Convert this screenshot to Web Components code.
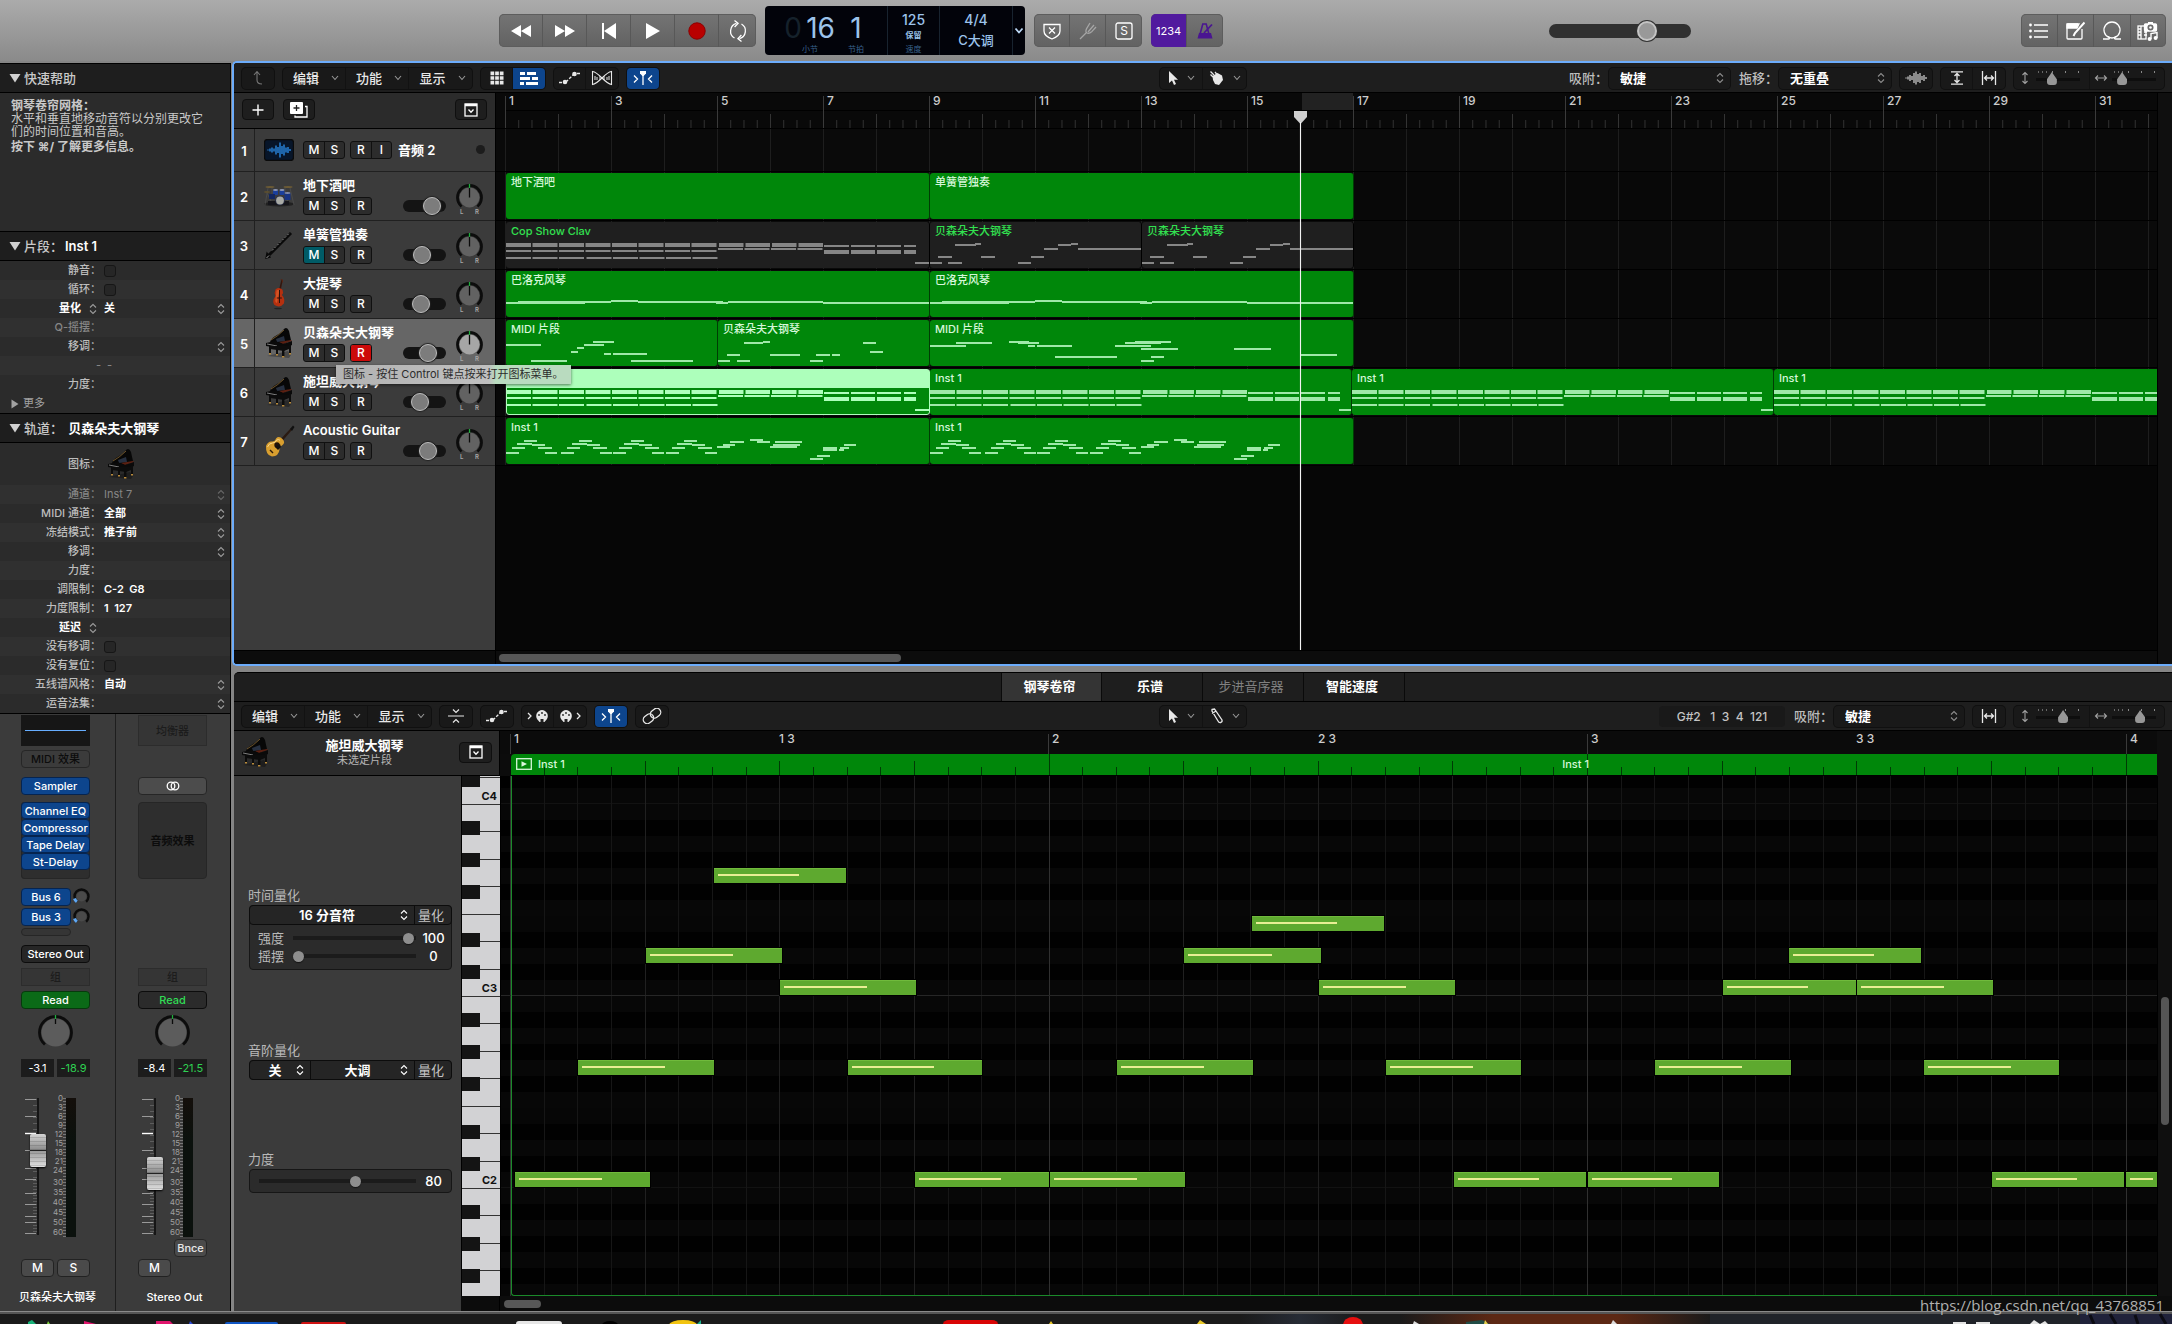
<!DOCTYPE html>
<html lang="zh-CN">
<head>
<meta charset="utf-8">
<title>Logic Pro</title>
<style>
  html, body { margin: 0; height: 100%; overflow: hidden; background: #858585; }
  body { font-family: Inter, "Noto Sans CJK SC", sans-serif; color: #e6e6e6; }
</style>
</head>
<body>
<daw-app></daw-app>
<script>
/* ---------- shared base ---------- */
const BASE = `
  *, *::before, *::after { box-sizing: border-box; }
  :host { display: block; font: 500 12px/16px Inter, "Noto Sans CJK SC", sans-serif; }
  button, input, select { font: inherit; color: inherit; margin: 0; padding: 0; border: 0; background: none; outline: none; appearance: none; -webkit-appearance: none; border-radius: 0; }
  button { display: flex; align-items: center; justify-content: center; white-space: nowrap; }
  select { white-space: nowrap; text-overflow: clip; }
`;
class Part extends HTMLElement {
  connectedCallback() {
    if (this.shadowRoot) return;
    this.attachShadow({ mode: 'open' }).innerHTML = `<style>${BASE}${this.css()}</style>${this.html()}`;
  }
  css() { return ''; }
  html() { return '<slot></slot>'; }
  a(n, d = '') { return this.getAttribute(n) ?? d; }
}
const def = (n, c) => customElements.define(n, c);

/* ---------- icons ---------- */
const S = (w, h, body, x = '') => `<svg xmlns="http://www.w3.org/2000/svg" width="${w}" height="${h}" viewBox="0 0 ${w} ${h}" fill="none" stroke="currentColor" stroke-width="1.3" ${x}>${body}</svg>`;
const PIANO = `<g stroke="none">
  <path d="M3 29 L25 31 L27 28 L24 24 Z" fill="#000" opacity=".3"/>
  <path d="M6 15 C8 9 16 8 20 2 Q23 -1 25 4 Q26 9 27 13 L18 18 Z" fill="#070707"/>
  <path d="M7 13 Q14 9 20 3" stroke="#8a6a35" stroke-width=".8" fill="none"/>
  <path d="M12 12 L20 9 L21 14 L13 15 Z" fill="#273040"/>
  <path d="M15 15 L27 13 L28 14 L19 17 Z" fill="#5a2012"/>
  <path d="M2 16 L11 14 L19 17 L28 14 L28 18 L20 22 L2 19 Z" fill="#0a0a0a"/>
  <path d="M3 17 L13 19" stroke="#999" stroke-width=".8"/>
  <path d="M5 19h2v8h-2zM12 20h2v8h-2zM18 21h2.4v9h-2.4zM25 18h2v9h-2z" fill="#0c0c0c"/>
  <path d="M6 19h19v3l-5 2-14-2z" fill="#0c0c0c"/>
  <path d="M5 26h2v1.6h-2zM12 27h2v1.6h-2zM18 29h2.4v1.6h-2.4zM25 26h2v1.6h-2z" fill="#b88a3a"/>
</g>`;
const ICONS = {
  rew: S(24, 16, '<path d="M12 2v12L2 8zM22 2v12L12 8z" fill="currentColor" stroke="none"/>'),
  fwd: S(24, 16, '<path d="M2 2v12l10-6zM12 2v12l10-6z" fill="currentColor" stroke="none"/>'),
  start: S(20, 18, '<path d="M3 1h2v16H3zM17 1v16L5 9z" fill="currentColor" stroke="none"/>'),
  play: S(20, 20, '<path d="M3 2v16l14-8z" fill="currentColor" stroke="none"/>'),
  rec: S(20, 20, '<circle cx="10" cy="10" r="8.2" fill="#b90000" stroke="#8c0000" stroke-width="1"/>'),
  cycle: S(22, 22, '<path d="M7.5 18A8 8 0 0 1 9.500 3.400M14.500 4A8 8 0 0 1 12.500 18.600"/><path d="M7.500 .5l3.600 2.900L7.600 7M14.500 21.500l-3.600-2.900 3.500-3.600"/>'),
  shield: S(20, 20, '<path d="M2 3.5h16V10q0 5-8 8-8-3-8-8z"/><path d="M7 6.5l6 6M13 6.5l-6 6"/>'),
  fork: S(20, 20, '<path d="M2 18l6-6M12 2L8.6 7.6Q7 11 9 12t5-1.6L18 6M16 4L10 11"/>'),
  sbox: S(20, 20, '<rect x="2" y="2" width="16" height="16" rx="2"/>'),
  metro: S(20, 20, '<path d="M7.8 3h3.4l3 11H4.8z" stroke="currentColor" fill="none" stroke-width="1.6"/><path d="M4 12h12l1.5 5.5H2.5z" fill="currentColor" stroke="none"/><path d="M9 12L17 3.5" stroke-width="1.8"/>'),
  list: S(22, 18, '<path d="M6 3h14M6 9h14M6 15h14" stroke-width="1.4"/><g fill="currentColor" stroke="none"><circle cx="2.5" cy="3" r="1.4"/><circle cx="2.5" cy="9" r="1.4"/><circle cx="2.5" cy="15" r="1.4"/></g>'),
  note: S(20, 20, '<path d="M13 3H3q-1 0-1 1v13q0 1 1 1h13q1 0 1-1V8"/><path d="M2 3h12l-2 4H2z" fill="currentColor"/><path d="M19.5 1.5L10 12l-1.5 3" stroke-width="2"/>'),
  loop: S(20, 20, '<path d="M1 18h5.500q1.500 0 .5-1.600A8 8 0 1 1 13 16.400q-1 1.600.5 1.600H19"/><path d="M6 15.500q4 3 8 0"/>'),
  media: S(24, 22, '<rect x="2" y="6" width="8" height="13"/><path d="M2 9h3M2 12h3M2 15h3M8 12h3M8 15h3M5 6v13"/><rect x="8.500" y="4" width="12" height="7" rx="1" fill="currentColor"/><path d="M12 3h5" stroke-width="2"/><circle cx="14.500" cy="7.500" r="2.400" fill="#6a6a6a" stroke="#6a6a6a"/><circle cx="14.500" cy="7.500" r="1.300" fill="currentColor" stroke="none"/><path d="M15 19v-5.500l6-1V18" stroke-width="1.400"/><g fill="currentColor" stroke="none"><circle cx="13.600" cy="19" r="2"/><circle cx="19.600" cy="18" r="2"/></g>'),
  chev: S(8, 6, '<path d="M1 1l3 3.500L7 1" stroke-width="1.100"/>'),
  chevb: S(10, 8, '<path d="M1.500 1.500L5 5.500l3.500-4" stroke-width="1.800"/>'),
  updown: S(8, 12, '<path d="M1 4.500L4 1.500l3 3M1 7.500l3 3 3-3" stroke-width="1.100"/>'),
  up: S(14, 16, '<path d="M3 5l3-3.500L9 5M6 2v8q0 4 5 4" stroke-width="1.100"/>'),
  grid9: S(14, 14, '<path d="M0 0h4v4H0zM5 0h4v4H5zM10 0h4v4h-4zM0 5h4v4H0zM5 5h4v4H5zM10 5h4v4h-4zM0 10h4v4H0zM5 10h4v4H5zM10 10h4v4h-4z" fill="currentColor" stroke="none" transform="translate(.500 .500) scale(.93)"/>'),
  bars: S(18, 14, '<path d="M0 1h5v3H0zM7 1h9v3H7zM0 6h10v3H0zM12 6h6v3h-6zM0 11h4v3H0zM6 11h12v3H6z" fill="currentColor" stroke="none"/>'),
  auto: S(24, 14, '<path d="M1 11.500h3M19 2.500h4M8 11L16 3" stroke-dasharray="3 1.500"/><circle cx="7" cy="11" r="2.300" fill="currentColor" stroke="none"/><circle cx="16.500" cy="3" r="2.300" fill="currentColor" stroke="none"/>'),
  flex: S(22, 16, '<path d="M1.500 1.500v13Q5 14 11 8T20.500 1.500v13Q17 14 11 8T1.500 1.500z" stroke-width="1.100"/><path d="M4 6v4M6 7v3M9 6v4M13 6v4M16 7v3M18 6v4" stroke-width="1"/>'),
  catch: S(22, 16, '<path d="M8 1h6v2.500L11.600 6h-1.200L8 3.500z" fill="currentColor" stroke="none"/><path d="M11 5v10M2 5.500L5.500 9 2 12.500M20 5.500L16.500 9l3.500 3.500"/>'),
  pointer: S(12, 16, '<path d="M2 1v12l3-2.600L7 15l2-.9-2-4.400h4z" fill="currentColor" stroke="none"/>'),
  hand: S(16, 16, '<path d="M5 5L1.500 1.500M4 7L1.500 4.500M8 4.500L6 2" stroke-width="1.300"/><path d="M3.500 6l5-3 4.500 2.500 1 4.500-4 5-4-1-2-4z" fill="currentColor" stroke="none"/>'),
  pencil: S(14, 16, '<path d="M2 1.500l2.500-.5L12 12q.5 2-1.300 2.500Q9 15 8 13L2 3zM2 5.500L6 3"/>'),
  wave: S(22, 14, '<path d="M1 6.500v1M3 5.500v3M5 4v6M7 5v4M9 2v10M11 .5v13M13 3v8M15 2v10M17 5v4M19 4v6M21 6v2" stroke-width="1.100"/>'),
  vfit: S(14, 14, '<path d="M1 .8h12M1 13.200h12M7 3v8M4.500 5L7 2.500 9.500 5M4.500 9L7 11.500 9.500 9"/>'),
  hfit: S(16, 14, '<path d="M1.500 0v14M14.500 0v14M3.500 7h9M6 4.500L3.500 7 6 9.500M10 4.500L12.500 7 10 9.500"/>'),
  vz: S(8, 14, '<path d="M4 1.500v11M1.500 4L4 1.500 6.500 4M1.500 10L4 12.500 6.500 10" stroke-width="1.100"/>'),
  hz: S(14, 8, '<path d="M1.500 4h11M4 1.500L1.500 4 4 6.500M10 1.500L12.500 4 10 6.500" stroke-width="1.100"/>'),
  plus: S(12, 12, '<path d="M6 .5v11M.5 6h11" stroke-width="1.400"/>'),
  dup: S(18, 16, '<path d="M5 13.500v1.500h12V4.500h-2"/><rect x="0" y="0" width="13" height="12" rx="1" fill="currentColor" stroke="none"/><path d="M6.500 3v6M3.500 6h6" stroke="#222"/>'),
  cfg: S(14, 14, '<rect x="1" y="1" width="12" height="12"/><path d="M1 2h12" stroke-width="2.500"/><path d="M4.500 6.500L7 9.200l2.500-2.700"/>'),
  collapse: S(16, 16, '<path d="M0 8h16M5 1.500l3 3 3-3M5 14.500l3-3 3 3" stroke-width="1.200"/>'),
  midin: S(22, 14, '<path d="M1 4l3 3-3 3"/><path d="M15 1a6 6 0 0 1 5 9l-2.500 3h-5L10 10a6 6 0 0 1 5-9z" fill="currentColor" stroke="none"/><g fill="#222" stroke="none"><circle cx="15" cy="4" r=".9"/><circle cx="12" cy="6" r=".9"/><circle cx="18" cy="6" r=".9"/><path d="M13.500 10h3v3h-3z"/></g>'),
  midout: S(22, 14, '<path d="M18 4l3 3-3 3"/><path d="M7 1a6 6 0 0 1 5 9l-2.500 3h-5L2 10a6 6 0 0 1 5-9z" fill="currentColor" stroke="none"/><g fill="#222" stroke="none"><circle cx="7" cy="4" r=".9"/><circle cx="4" cy="6" r=".9"/><circle cx="10" cy="6" r=".9"/><path d="M5.500 10h3v3h-3z"/></g>'),
  link: S(20, 16, '<g transform="rotate(-38 10 8)"><rect x="0" y="4" width="11" height="8" rx="4"/><rect x="9" y="4" width="11" height="8" rx="4"/></g>'),
  stereo: S(14, 10, '<circle cx="5" cy="5" r="3.800"/><circle cx="9" cy="5" r="3.800"/>'),
  tri: S(12, 10, '<path d="M.5 1h11L6 9.500z" fill="currentColor" stroke="none"/>'),
  trir: S(8, 10, '<path d="M.5 .5v9l7-4.500z" fill="currentColor" stroke="none"/>'),
  region: S(16, 12, '<rect x=".7" y=".7" width="14.600" height="10.600"/><path d="M5.500 3.200v5.600L11 6z" fill="currentColor" stroke="none"/>'),
  audio: S(30, 22, '<rect x=".5" y=".5" width="29" height="21" rx="3" fill="#071529" stroke="#0a0a0a"/><path d="M4 10.500v1M6 9.500v3M8 8.500v5M10 9.500v3M12 6.500v9M14 8v6M16 3.500v15M18 7v8M20 5.500v11M22 8.500v5M24 8v6M26 10v2" stroke="#2f9bff" stroke-width="1.200"/>'),
  drums: S(32, 24, '<g stroke="none"><ellipse cx="16" cy="20" rx="15" ry="2.500" fill="#111" opacity=".6"/><path d="M5 4L2 21M4 9l6 12M27 4l4 17M28 9l-6 12M9 2v8M22 2v8" stroke="#4e4e4e" stroke-width=".8" fill="none"/><ellipse cx="7" cy="3" rx="4.500" ry="1" fill="#6b5a35"/><ellipse cx="25" cy="3" rx="4.500" ry="1" fill="#6b5a35"/><ellipse cx="4" cy="8" rx="3" ry=".9" fill="#5c4f30"/><rect x="10" y="6" width="5" height="5" rx="1" fill="#1a3f9c"/><rect x="16.500" y="6" width="5" height="5" rx="1" fill="#1a3f9c"/><ellipse cx="12.500" cy="6" rx="2.500" ry=".9" fill="#8d97b5"/><ellipse cx="19" cy="6" rx="2.500" ry=".9" fill="#8d97b5"/><rect x="6" y="10" width="6" height="5" fill="#13275f"/><rect x="21.500" y="9" width="6" height="7" fill="#183484"/><ellipse cx="24.500" cy="9" rx="3" ry="1" fill="#7f88a5"/><path d="M5 17h21v4H5z" fill="#15151a"/><circle cx="17" cy="16.500" r="4.800" fill="#2b3048"/><circle cx="17" cy="16.500" r="3.900" fill="#a9aba6"/></g>'),
  clarinet: S(30, 30, '<path d="M3 27L27 3" stroke="#0a0a0a" stroke-width="3"/><path d="M2 28l4-1-3-4z" fill="#0a0a0a" stroke="#0a0a0a"/><path d="M8 20.500L25 3.500" stroke="#8b8b8b" stroke-width="1" stroke-dasharray="2 1.600"/><path d="M2.500 28L5 25.500" stroke="#bbb" stroke-width=".8"/>'),
  cello: S(30, 32, '<g stroke="none"><ellipse cx="14" cy="30.500" rx="4" ry=".8" fill="#222"/><path d="M14.200 15L17.500 1.500l1.200.4-2.700 14z" fill="#34160d"/><path d="M16.800 1.500q2.500-.5 1.700 3" stroke="#5a2413" fill="none" stroke-width="1"/><path d="M11.500 11.500q3.500-3 7 .2 1.400 3-.6 5.300 3.400 3.500 2 8.500Q16 30.500 10.500 27q-3-3.500 1-9-1.600-3.500 0-6.500z" fill="#b5300f"/><path d="M12.500 12.500q2-1.500 3 0L13 25q-2.500-1-1.500-4z" fill="#e0612c" opacity=".7"/><path d="M15.500 12v13M12.800 20h5" stroke="#2a0f08" stroke-width="1"/></g>'),
  piano: S(30, 32, PIANO),
  guitar: S(32, 32, '<g stroke="none"><path d="M14 18L28 3l1.500 1.300L16 20z" fill="#2a1a12"/><path d="M27 4l3-3.500L31.500 2 29 6z" fill="#101010"/><path d="M3 21q2-5 6-4.500 3 .3 4-3 3-3 6.500.5 3.500 3.500-.5 6.500-3 1.500-2.500 4-.5 6.500-7.500 7-6.500-1-6-10.500z" fill="#d99f2f"/><path d="M4.500 22q1.500-4 5-4 3 0 4.200-3 2-1 3.300.3" stroke="#f6d58a" stroke-width="1" fill="none"/><circle cx="14" cy="20" r="2.700" fill="#20120a"/><path d="M12 22l3 3 3-3-1-3z" fill="#15100c"/><path d="M7 25l3 3" stroke="#2d1a0b" stroke-width="1.400"/></g>')
};
def('daw-icon', class extends Part {
  css() { return ':host{display:block;flex:none;line-height:0} svg{display:block}'; }
  html() { return ICONS[this.a('name')] || ''; }
});
const I = n => `<daw-icon name="${n}"></daw-icon>`;

/* pan knob */
def('pan-knob', class extends Part {
  css() { return ':host{display:block;flex:none} svg{display:block}'; }
  html() {
    const s = +this.a('size', 26), c = s / 2, r = c - 1.5, k = Math.sin(.72), q = Math.cos(.72);
    const f = this.a('fill', '#666');
    return S(s, s, `<circle cx="${c}" cy="${c}" r="${r - 2}" fill="${f}" stroke="none"/>
      <path d="M${c - r * k} ${c + r * q}A${r} ${r} 0 1 1 ${c + r * k} ${c + r * q}" stroke="#0c0c0c" stroke-width="${s > 20 ? 2.8 : 2.4}"/>
      ${this.hasAttribute('send') ? `<path d="M${c - r * k} ${c + r * q}A${r} ${r} 0 0 1 ${c - r} ${c + 2}" stroke="#5fa8f5" stroke-width="3"/>` : `<path d="M${c} 1v${s > 30 ? 8 : c - 1}" stroke="#0a0a0a" stroke-width="1.300"/><path d="M${c} 0v4" stroke="#1fae3c"/>`}`);
  }
});

/* ---------- control bar ---------- */
def('control-bar', class extends Part {
  css() { return `
    :host { display: flex; align-items: flex-start; position: relative; background: linear-gradient(#ababab, #8a8a8a); }
    .bar { flex: 1; display: grid; grid-template-columns: 499px 1fr auto; }
    .mid { display: flex; align-items: flex-start; grid-column: 2; }
    .grp { display: flex; height: 33px; margin-top: 14px; border-radius: 5px; overflow: hidden; background: linear-gradient(#747474, #626262); box-shadow: inset 0 0 0 1px #5d5d5d; color: #fff; }
    .grp button { width: 36px; border-right: 1px solid #585858; }
    .grp button:last-child { border-right: 0; }
    .grp.transport button { width: 44px; } .grp.transport button:last-child { width: 37px; }
    .lcd { display: grid; grid-template-columns: 123px 52px 73px 12px; width: 260px; height: 49px; margin: 6px 9px 0; background: #02030a; border-radius: 4px; color: #9cc3ea; overflow: hidden; }
    .lcd > div { border-right: 1px solid #18232f; display: flex; flex-direction: column; align-items: center; }
    .pos { display: grid !important; grid-template-columns: 37px 33px 42px; align-items: end !important; grid-template-rows: 38px 10px; }
    .pos b { font: 400 28px/32px Inter; text-align: right; }
    .pos .ghost { color: #15212b; }
    .pos .one { text-align: center; }
    small { font: 400 8px/10px Inter, "Noto Sans CJK SC"; color: #38608a; text-align: center; display: block; }
    .pos .l1 { grid-column: 2; text-align: left; } .tempo span { font: 500 14px/16px Inter; margin-top: 6px; } .tempo i { font: 700 8px/10px "Noto Sans CJK SC"; margin: 2px 0 4px; }
    .key span { font: 500 14px/16px Inter; margin-top: 6px; } .key em { font: 500 13px/16px Inter, "Noto Sans CJK SC"; margin-top: 4px; font-style: normal; }
    .lcd button { color: #bcd8f5; }
    .g2 { margin-right: 9px; }
    .sb { position: relative; } .sb span { position: absolute; inset: 0; font: 400 12px/33px Inter; text-align: center; }
    .count { background: #511a9e; font: 400 11px/14px Inter; } .metro { color: #4a1591; }
    .vol { margin: 24px 0 0 auto; width: 142px; height: 14px; border-radius: 7px; background: #303030; }
    .vol::-webkit-slider-thumb { -webkit-appearance: none; width: 20px; height: 20px; border-radius: 50%; background: #999; border: 2px solid #c4c4c4; box-shadow: 0 0 0 1px #333; }
    .right { display: flex; margin: 0 6px 0 330px; }
    .right .grp { width: 145px; } .right button { flex: 1; }
  `; }
  html() { return `<div class="bar"><div class="mid">
      <div class="grp transport">${['rew', 'fwd', 'start', 'play', 'rec', 'cycle'].map(n => `<button aria-label="${n}">${I(n)}</button>`).join('')}</div>
      <div class="lcd">
        <div class="pos"><b class="ghost">0</b><b>16</b><b class="one">1</b><small class="l1">小节</small><small>节拍</small></div>
        <div class="tempo"><span>125</span><i>保留</i><small>速度</small></div>
        <div class="key"><span>4/4</span><em>C大调</em></div>
        <button aria-label="显示模式">${I('chevb')}</button>
      </div>
      <div class="grp g2"><button aria-label="替换">${I('shield')}</button><button aria-label="调音器" style="color:#a5a5a5">${I('fork')}</button><button class="sb">${I('sbox')}<span>S</span></button></div>
      <div class="grp"><button class="count">1234</button><button class="metro" aria-label="节拍器">${I('metro')}</button></div>
      <input class="vol" type="range" min="0" max="100" value="72" aria-label="主音量">
    </div>
    <div class="right"><div class="grp">${['list', 'note', 'loop', 'media'].map(n => `<button aria-label="${n}">${I(n)}</button>`).join('')}</div></div></div>`; }
});

/* ---------- left inspector ---------- */
let uid = 0;
def('prop-row', class extends Part {
  css() { return `
    :host { display: grid; grid-template-columns: 101px 1fr auto; align-items: center; column-gap: 3px; height: 19px; padding-right: 3px; font-size: 11px; line-height: 19px; color: #fff; }
    label, .lab { color: #bdbdbd; text-align: right; white-space: nowrap; }
    :host([dim]) label, :host([dim]) select, :host([dim]) .lab { color: #868686; }
    :host([dim]) output { color: #868686; font-weight: 500; }
    :host([strong]) .lab { color: #fff; font-weight: 700; display: flex; justify-content: flex-end; align-items: center; gap: 8px; padding-right: 2px; }
    select { font-weight: 700; width: 100%; height: 19px; } :host([dim]) select { font-weight: 400; opacity: 1; }
    input { width: 12px; height: 12px; border: 1px solid #161616; border-radius: 3px; background: #262626; }
    output { font-weight: 600; white-space: pre; }
    daw-icon { color: #9a9a9a; width: 10px; } :host([dim]) daw-icon { color: #666; }
  `; }
  html() {
    const id = 'p' + (++uid), t = this.a('label'), k = this.a('kind'), v = this.a('value');
    const lab = this.hasAttribute('strong') ? `<label class="lab" for="${id}">${t} ${I('updown')}</label>` : `<label for="${id}">${t}</label>`;
    if (k === 'check') return `${lab}<input id="${id}" type="checkbox">`;
    if (k === 'select') return `${lab}<select id="${id}"><option>${v}</option></select>${I('updown')}`;
    return `${lab}<output id="${id}">${v}</output>`;
  }
});
def('side-section', class extends Part {
  css() { return `
    header { display: flex; align-items: center; height: 30px; padding-left: 9px; background: #1e1e1e; border: solid #000; border-width: 1px 0; font-size: 13px; line-height: 20px; color: #c9c9c9; }
    daw-icon { color: #d0d0d0; margin-right: 3px; } b { color: #fff; font-weight: 600; padding-left: 2px; white-space: pre; }
    .body { background: #2b2b2b; }
    ::slotted(*:nth-child(even)) { background: #303030; }
  `; }
  html() { return `<header>${I('tri')}<span>${this.a('label')}</span><b>${this.a('name')}</b></header><div class="body"><slot></slot></div>`; }
});
def('side-inspector', class extends Part {
  css() { return `
    :host { display: flex; flex-direction: column; background: #3b3b3b; border-right: 1px solid #000; min-height: 0; }
    .help { height: 138px; padding: 6px 20px 0 11px; color: #c9c9c9; font: 400 12px/13px Inter, "Noto Sans CJK SC"; }
    .help b { display: block; font-weight: 700; } .help p { margin: 0 0 2px; }
    .more { display: flex; align-items: center; gap: 4px; height: 19px; padding-left: 11px; font: 400 11px/19px Inter, "Noto Sans CJK SC"; color: #a2a2a2; width: 100%; justify-content: flex-start; }
    .pic { display: flex; align-items: center; height: 42px; font-size: 11px; color: #bdbdbd; }
    .pic span { width: 101px; text-align: right; margin-right: 5px; }
    .strips { flex: 1; display: grid; grid-template-columns: 116px 1fr; min-height: 0; border-top: 1px solid #000; }
  `; }
  html() {
    const r = (l, k, v = '', x = '') => `<prop-row label="${l}" kind="${k}" value="${v}" ${x}></prop-row>`;
    return `
    <side-section label="快速帮助"><div class="help"><b>钢琴卷帘网格：</b><p>水平和垂直地移动音符以分别更改它们的时间位置和音高。</p><b>按下 ⌘/ 了解更多信息。</b></div></side-section>
    <side-section label="片段：" name="Inst 1">${r('静音：', 'check')}${r('循环：', 'check')}${r('量化', 'select', '关', 'strong')}${r('Q-摇摆：', 'text', '', 'dim')}${r('移调：', 'select')}${r('-', 'text', ' -', 'dim')}${r('力度：', 'text')}<button class="more">${I('trir')}更多</button></side-section>
    <side-section label="轨道：" name=" 贝森朵夫大钢琴"><div class="pic"><span>图标：</span>${I('piano')}</div>${r('通道：', 'select', 'Inst 7', 'dim')}${r('MIDI 通道：', 'select', '全部')}${r('冻结模式：', 'select', '推子前')}${r('移调：', 'select')}${r('力度：', 'text')}${r('调限制：', 'text', 'C-2  G8')}${r('力度限制：', 'text', '1  127')}${r('延迟', 'text', '', 'strong')}${r('没有移调：', 'check')}${r('没有复位：', 'check')}${r('五线谱风格：', 'select', '自动')}${r('运音法集：', 'select')}</side-section>
    <div class="strips">
      <channel-strip kind="inst" name="贝森朵夫大钢琴" level="-3.1" peak="-18.9" fader="65"></channel-strip>
      <channel-strip kind="out" name="Stereo Out" level="-8.4" peak="-21.5" fader="43"></channel-strip>
    </div>`;
  }
});
def('channel-strip', class extends Part {
  css() { return `
    :host { display: flex; flex-direction: column; padding: 1px 0 0 21px; border-right: 1px solid #1e1e1e; font-size: 11px; line-height: 14px; color: #fff; }
    :host([kind=out]) { border-right: 0; padding-left: 22px; }
    .col > * { width: 69px; } .col { display: flex; flex-direction: column; }
    .eq { height: 31px; background: #161616; display: flex; align-items: center; justify-content: center; }
    .eq i { width: 61px; height: 1px; background: #66adff; }
    .flat { background: #353535; border: 1px solid #2c2c2c; color: #1c1c1c; }
    .slot { height: 18px; border: 1px solid #262626; border-radius: 4px; background: #353535; }
    .blue { background: #0d458d; border-color: #06244f; height: 17px; }
    .midi { margin-top: 4px; color: #0c0c0c; background: #3b3b3b; } .inst { margin-top: 9px; height: 18px; }
    .out .inst { background: #4c4c4c; }
    .fx { margin-top: 7px; height: 77px; border: 1px solid #262626; border-radius: 4px; background: #2e2e2e; display: flex; flex-direction: column; color: #0c0c0c; align-items: center; justify-content: center; font-weight: 700; }
    .inst-s .fx { justify-content: flex-start; border: 0; box-shadow: inset 0 0 0 1px #262626; color: #fff; font-weight: 500; }
    .fx .slot { width: 69px; }
    .sends { margin-top: 9px; height: 49px; display: grid; grid-template: 18px 18px 9px / 50px 17px; gap: 2px; }
    .sends .slot.blue { height: 18px; } .sends .empty { height: 8px; }
    .route { margin-top: 8px; background: #262626; border-color: #0c0c0c; }
    .none { visibility: hidden; }
    .group { margin-top: 5px; height: 18px; } .read { margin-top: 5px; height: 18px; background: #0b6a17; border-color: #063a0c; }
    .out .read { background: #2b2b2b; color: #31dd55; border-color: #0c0c0c; }
    .knob { margin-top: 6px; height: 37px; display: flex; justify-content: center; }
    .vals { margin-top: 7px; display: flex; gap: 3px; } .vals output { width: 33px; height: 18px; line-height: 18px; background: #1c1c1c; text-align: center; font-weight: 400; font-size: 11px; }
    .vals output + output { color: #2fd052; }
    .fader { margin-top: 21px; height: 137px; display: grid; grid-template-columns: 4px 17px 17px 3px 10px; padding-left: 4px; position: relative; }
    .fader > svg { grid-column: 1; grid-row: 1; overflow: visible; }
    .fader input { grid-column: 2; grid-row: 1; writing-mode: vertical-lr; direction: rtl; width: 17px; height: 137px; background: linear-gradient(90deg, transparent 8px, #161616 8px 10px, transparent 10px); position: relative; }
    .fader input::-webkit-slider-thumb { -webkit-appearance: none; width: 16px; height: 33px; border-radius: 2px; background: repeating-linear-gradient(#0000 0 3px, #0002 3px 4px), linear-gradient(#d4d4d4, #8c8c8c 48%, #222 48% 52%, #9c9c9c 52%, #e0e0e0); box-shadow: 0 1px 2px #000; }
    ol { margin: -4px 0 0; padding: 0; list-style: none; font: 400 8px/9px Inter; color: #a0a0a0; text-align: right; grid-column: 3; }
    li { height: 9px; } li.w { height: 10px; line-height: 10px; } li.gap { margin-top: 2px; }
    .tk { background: repeating-linear-gradient(#777 0 1px, transparent 1px 3px); grid-column: 4; } .meter { background: linear-gradient(#140f0b, #0e100c 20%, #0b110d 30%); grid-column: 5; border: 0; }
    .bnce { margin: 4px 0 0 36px; width: 33px !important; background: #4a4a4a; color: #e8e8e8; }
    .ms { margin-top: 2px; display: flex; gap: 3px; } .ms button { width: 33px; height: 18px; border: 1px solid #222; border-radius: 4px; background: #4a4a4a; font-size: 12px; }
    .nm { margin: 12px 0 0 -21px; width: 115px !important; text-align: center; line-height: 16px; font-weight: 500; }
    .out .nm { margin-left: -21px; }
  `; }
  html() {
    const inst = this.a('kind') === 'inst';
    const big = [0, 17, 34, 51, 69, 80, 94, 105, 117, 123, 134];
    const ticks = [...Array(45)].map((_, i) => `<path d="M8 ${i * 3 + 1.5}h5" stroke="#6d6d6d" stroke-width=".7"/>`).filter((_, i) => i > 25 || i % 2 === 0).join('') + big.map(y => `<path d="M0 ${y + 1.5}h11" stroke="${y === 34 ? '#fff' : '#999'}" stroke-width="${y === 34 ? 1.4 : 1}"/>`).join('');
    const nums = [0, 3, 6, 9, 12, 15, 18, 21, 24, 30, 35, 40, 45, 50, 60];
    return `<div class="col ${inst ? 'inst-s' : 'out'}">
      ${inst ? '<div class="eq"><i></i></div>' : '<button class="eq flat">均衡器</button>'}
      <button class="slot midi ${inst ? '' : 'none'}">${inst ? 'MIDI 效果' : ''}</button>
      ${inst ? '<button class="slot blue inst">Sampler</button>' : `<button class="slot inst" aria-label="立体声">${I('stereo')}</button>`}
      <div class="fx">${inst ? ['Channel EQ', 'Compressor', 'Tape Delay', 'St-Delay'].map(t => `<button class="slot blue">${t}</button>`).join('') : '音频效果'}</div>
      <div class="sends">${inst ? `<button class="slot blue">Bus 6</button><pan-knob size="17" send fill="#4a4a4a"></pan-knob><button class="slot blue">Bus 3</button><pan-knob size="17" send fill="#4a4a4a"></pan-knob><div class="slot empty"></div>` : ''}</div>
      <button class="slot route ${inst ? '' : 'none'}">${inst ? 'Stereo Out' : ''}</button>
      <button class="group flat">组</button>
      <button class="slot read">Read</button>
      <div class="knob"><pan-knob size="35" fill="#5c5c5c"></pan-knob></div>
      <div class="vals"><output>${this.a('level')}</output><output>${this.a('peak')}</output></div>
      <div class="fader"><svg width="13" height="137">${ticks}</svg><input type="range" min="0" max="100" value="${this.a('fader')}" aria-label="音量"><ol>${nums.map((n, i) => `<li class="${i > 8 ? 'w' : ''} ${i === 9 ? 'gap' : ''}">${n}</li>`).join('')}</ol><div class="tk"></div><div class="meter"></div></div>
      <button class="slot bnce ${inst ? 'none' : ''}">${inst ? '' : 'Bnce'}</button>
      <div class="ms"><button>M</button>${inst ? '<button>S</button>' : ''}</div>
      <div class="nm">${this.a('name')}</div></div>`;
  }
});

/* ---------- editor toolbar ---------- */
def('tool-bar', class extends Part {
  css() { return `
    :host { display: grid; grid-template-columns: 1fr auto 1fr; align-items: center; height: 30px; padding: 1px 8px 0; background: #1e1e1e; border-bottom: 1px solid #000; color: #e8e8e8; }
    :host([kind=piano]) { height: 29px; padding-top: 0; }
    .side { display: flex; gap: 9px; align-items: center; } .end { justify-content: flex-end; }
    .g { display: flex; height: 21px; border-radius: 4px; background: #191919; overflow: hidden; box-shadow: 0 0 0 1px #101010; }
    .g > button { width: 32px; border-right: 1px solid #121212; } .g > button:last-child { border: 0; }
    .g.menu > button { width: 63px; font-size: 13px; line-height: 19px; gap: 12px; padding-left: 4px; } .menu daw-icon { color: #999; }
    .g.tools > button { width: 43px; gap: 8px; } .tools daw-icon + daw-icon { color: #999; }
    .g > .on { background: #0d458d; color: #fff; } .off { color: #777; }
    label { font-size: 13px; line-height: 20px; color: #bdbdbd; white-space: nowrap; margin-right: -8px; }
    .sel { width: 121px; align-items: center; padding: 0 6px 0 11px; color: #8c8c8c; } .sel.w2 { width: 112px; } .sel.w3 { width: 130px; }
    .sel select { flex: 1; min-width: 0; font-size: 13px; line-height: 19px; height: 19px; color: #fff; font-weight: 600; }
    .info { width: 126px; justify-content: center; font-size: 12px; line-height: 21px; color: #c4c4c4; white-space: pre; font-weight: 500; box-shadow: none; }
    .zoom { width: 150px; display: grid; grid-template-columns: 75px 1fr; color: #a0a0a0; }
    .zoom > div { display: grid; grid-template-columns: 22px 44px; align-items: center; justify-items: center; } .zoom > div + div { border-left: 1px solid #121212; grid-template-columns: 22px 44px; }
    .zoom input { width: 44px; height: 21px; background: linear-gradient(#666,#666) 2px 3px/1px 2px no-repeat, linear-gradient(#666,#666) 6px 3px/1px 2px no-repeat, linear-gradient(#666,#666) 10px 3px/1px 2px no-repeat, linear-gradient(#888,#888) 16px 3px/1px 2px no-repeat, linear-gradient(#888,#888) 29px 3px/1px 2px no-repeat, linear-gradient(#888,#888) 42px 3px/1px 2px no-repeat, linear-gradient(#0e0e0e,#0e0e0e) 0 10px/44px 3px no-repeat; }
    .zoom input::-webkit-slider-thumb { -webkit-appearance: none; width: 10px; height: 13px; margin-top: 1px; background: #979797; border-radius: 0 0 3px 3px; clip-path: polygon(50% 0, 68% 22%, 100% 55%, 100% 100%, 0 100%, 0 55%, 32% 22%); }
  `; }
  html() {
    const menus = `<div class="g menu">${['编辑', '功能', '显示'].map(t => `<button>${t}${I('chev')}</button>`).join('')}</div>`;
    const b = (n, c = '') => `<button class="${c}" aria-label="${n}">${I(n)}</button>`;
    const g = (...x) => `<div class="g">${x.join('')}</div>`;
    const zoom = (p, q) => `<div class="g zoom"><div>${I('vz')}<input type="range" value="${p}" aria-label="垂直缩放"></div><div>${I('hz')}<input type="range" value="${q}" aria-label="水平缩放"></div></div>`;
    const tools = n => `<div class="g tools"><button aria-label="指针">${I('pointer')}${I('chev')}</button><button aria-label="${n}">${I(n)}${I('chev')}</button></div>`;
    if (this.a('kind') === 'piano') return `
      <div class="side">${menus}${g(b('collapse'))}${g(b('auto'))}${g(b('midin'), b('midout'))}${g(b('catch', 'on'))}${g(b('link'))}</div>${tools('pencil')}
      <div class="side end"><div class="g info">G#2   1  3  4  121</div><label for="sn">吸附：</label><div class="g sel w3"><select id="sn"><option>敏捷</option></select>${I('updown')}</div>${g(b('hfit'))}${zoom(65, 68)}</div>`;
    return `
      <div class="side">${g(b('up', 'off'))}${menus}${g(b('grid9'), b('bars', 'on'))}${g(b('auto'), b('flex'))}${g(b('catch', 'on'))}</div>${tools('hand')}
      <div class="side end"><label for="sn">吸附：</label><div class="g sel"><select id="sn"><option>敏捷</option></select>${I('updown')}</div><label for="dr">拖移：</label><div class="g sel w2"><select id="dr"><option>无重叠</option></select>${I('updown')}</div>${g(b('wave'))}${g(b('vfit'), b('hfit'))}${zoom(32, 15)}</div>`;
  }
});

/* ---------- track header ---------- */
def('track-header', class extends Part {
  css() { return `
    :host { display: grid; grid-template-columns: 21px 47px 1fr auto auto; height: 49px; background: #3b3b3b; border-bottom: 1px solid #202020; color: #fff; }
    :host([audio]) { height: 43px; } :host([sel]) { background: #666; }
    .n { border-right: 1px solid #202020; display: flex; align-items: center; justify-content: center; font-weight: 600; font-size: 13px; padding-top: 2px; }
    .ic { display: flex; align-items: center; justify-content: center; }
    .main { padding: 4px 0 0 1px; } .name { font-size: 13px; line-height: 18px; white-space: nowrap; height: 18px; font-weight: 600; }
    .btns { display: flex; gap: 5px; margin-top: 3px; align-items: center; }
    .p { display: flex; height: 18px; border: 1px solid #101010; border-radius: 3px; background: #2c2c2c; overflow: hidden; }
    .p button { width: 20px; font-weight: 500; font-size: 12px; } .p button + button { border-left: 1px solid #101010; }
    :host([mute]) .m { background: #005b66; } :host([sel]) .r { background: #cc0a0a; }
    .vol { width: 43px; height: 12px; margin: 28px 10px 0 0; border-radius: 6px; background: #141414; }
    .vol::-webkit-slider-thumb { -webkit-appearance: none; width: 18px; height: 18px; border-radius: 50%; background: #7c7c7c; border: 1px solid #bdbdbd; box-shadow: 0 0 1px 1px #222; }
    .pan { padding: 12px 12px 0 0; width: 39px; } .lr { display: flex; justify-content: space-between; padding: 0 4px; font: 600 6px/6px Inter; color: #a8a8a8; margin-top: -2px; }
    :host([audio]) .btns { margin-top: 8px; } :host([audio]) .name { padding-left: 1px; }
    .dot { width: 9px; height: 9px; border-radius: 50%; background: #1c1c1c; margin: 16px 10px 0 0; }
  `; }
  html() {
    const lead = `<div class="n">${this.a('n')}</div><div class="ic">${I(this.a('icon'))}</div>`;
    if (this.hasAttribute('audio')) return `${lead}<div class="main"><div class="btns"><div class="p"><button>M</button><button>S</button></div><div class="p"><button>R</button><button>I</button></div><div class="name">${this.a('name')}</div></div></div><i></i><div class="dot"></div>`;
    return `${lead}<div class="main"><div class="name">${this.a('name')}</div><div class="btns"><div class="p"><button class="m">M</button><button>S</button></div><div class="p"><button class="r">R</button></div></div></div><input class="vol" type="range" value="${this.a('vol')}" aria-label="${this.a('name')} 音量"><div class="pan"><pan-knob size="27" fill="${this.hasAttribute('sel') ? '#a6a6a6' : '#626262'}"></pan-knob><div class="lr"><span>L</span><span>R</span></div></div>`;
  }
});

/* ---------- regions ---------- */
const clav = () => {
  const o = [];
  for (let k = 0; k < 8; k++) { const x = k * 26.5; o.push([x, 21, 25, 4], [x, 28, 25], [x + (k > 2 ? 1 : 0), 35, 25]); }
  for (let k = 0; k < 4; k++) { const x = 212 + k * 26.5; o.push([x + 1, 21, 24.5, 4], [x, 26, 25]); }
  [[318, 25], [345, 24], [371, 24], [398, 12]].forEach(([x, w]) => o.push([x, 23, w], [x, 28, w, 4]));
  o.push([409, 40, 14]); return o;
};
const arch = x => [[x, 34, 13], [x + 6, 29, 13], [x + 11, 25, 15], [x + 18, 22, 13], [x + 26, 26, 13], [x + 32, 29, 14], [x + 39, 34, 12]];
const PAT = {
  none: [], clav: clav(),
  organ: [[0, 31, 12], [12, 30, 67, 3], [79, 30, 26], [105, 29, 27], [132, 30, 85], [210, 31, 12], [222, 30, 95], [317, 31, 107]],
  solo: [[0, 40, 12], [8, 34, 14], [25, 22, 21], [45, 21, 6], [18, 40, 14], [51, 34, 14], [88, 40, 13], [101, 34, 13], [114, 26, 14], [128, 22, 13], [141, 21, 7], [148, 26, 63]],
  midi1: [[0, 24, 35], [65, 31, 7], [71, 27, 7], [78, 24, 20], [87, 21, 21], [98, 33, 7], [107, 33, 34], [25, 40, 36], [125, 40, 62]],
  bosen: [[0, 40, 12], [9, 34, 13], [26, 22, 19], [45, 21, 7], [19, 40, 13], [52, 34, 30], [92, 40, 13], [98, 34, 14], [114, 34, 8], [145, 22, 13], [152, 31, 13]],
  midi2: [[0, 25, 36], [26, 22, 36], [79, 21, 20], [88, 22, 21], [98, 25, 7], [107, 25, 35], [125, 36, 62], [185, 25, 36], [195, 22, 36], [205, 21, 36], [211, 28, 37], [211, 40, 13], [221, 36, 13], [304, 28, 37], [371, 34, 36]],
  guitar: [...arch(0), ...arch(55), ...arch(107), ...arch(160), [211, 28, 13], [217, 26, 12], [224, 23, 14], [244, 21, 13], [251, 23, 13], [269, 23, 27], [267, 26, 27], [264, 28, 27], [304, 40, 13], [311, 37, 13], [317, 29, 14, 4], [333, 31, 5], [334, 29, 9], [338, 26, 12]]
};
def('track-region', class extends Part {
  css() { return `
    :host { position: absolute; top: 1px; height: 46px; border-radius: 3px; background: #00870a; overflow: hidden; color: #d6f7da; font-size: 11px; line-height: 14px; border-right: 1px solid #003d04; }
    :host([muted]) { background: #1f1f1f; color: #32e150; border-color: #000; --n: #868686; }
    :host([sel]) { background: linear-gradient(#adffbb 18px, #00870a 18px); border: 1px solid #adffbb; --n: #adffbb; }
    span { display: block; padding: 2px 0 0 5px; white-space: nowrap; }
    svg { position: absolute; left: 0; top: 0; fill: var(--n, #9fe9a9); } :host([sel]) svg { left: -1px; top: -1px; }
  `; }
  html() {
    this.style.left = this.a('x') + 'px'; this.style.width = this.a('w') + 'px';
    return `<svg width="424" height="46">${PAT[this.a('pat', 'none')].map(([x, y, w, h = 2]) => `<rect x="${x}" y="${y}" width="${w}" height="${h}"/>`).join('')}</svg><span>${this.a('name')}</span>`;
  }
});

/* ---------- arrange window ---------- */
def('arrange-window', class extends Part {
  css() { return `
    :host { display: flex; flex-direction: column; min-height: 0; border: 2px solid #6cacfb; border-right-width: 0; border-radius: 5px 0 0 5px; background: #0a0a0a; overflow: hidden; }
    .body { flex: 1; display: grid; grid-template-columns: 262px 1fr 15px; grid-template-rows: 1fr 14px; min-height: 0; position: relative; }
    .heads { background: #3b3b3b; border-right: 1px solid #000; } .top { height: 36px; background: #2b2b2b; border-bottom: 1px solid #000; display: flex; gap: 9px; padding: 6px 8px; }
    .top button { width: 32px; height: 21px; border: 1px solid #0f0f0f; border-radius: 4px; background: #1e1e1e; color: #fff; } .top button:last-child { margin-left: auto; }
    .time { position: relative; overflow: hidden; background: #060606; }
    .ruler { display: flex; height: 36px; padding-left: 9px; background: #090909; border-bottom: 1px solid #000; font-size: 12px; line-height: 14px; color: #cdcdcd; overflow: hidden; }
    .ruler span { flex: none; width: 106px; padding: 1px 0 0 4px;
      background: linear-gradient(#3a3a3a, #3a3a3a) 0 3px/1px 33px no-repeat, linear-gradient(#333, #333) 53px 21px/1px 15px no-repeat, linear-gradient(#000, #000) 0 17px/100% 1px no-repeat, linear-gradient(90deg, #333 1px, transparent 1px) 0 27px/12.5% 9px repeat-x; }
    .lane { position: relative; height: 49px; border-bottom: 1px solid #000; background: linear-gradient(90deg, #1e1e1e 1px, transparent 1px) 9px 0/53px 100% #080808; } .lane.a { height: 43px; } .lane:nth-child(even) { background-color: #0a0a0a; }
    .cycle { position: absolute; left: 806px; top: 0; width: 51px; height: 17px; background: #222; }
    .head { position: absolute; left: 797px; top: 18px; bottom: 0; width: 15px; } .head svg { display: block; } .head::after { content: ""; position: absolute; left: 7px; top: 11px; bottom: 0; width: 1px; background: #f2f2f2; box-shadow: 0 0 1px #aaa; }
    .v { background: #0f0f0f; border-left: 1px solid #000; } .f1 { background: #0c0c0c; border-top: 1px solid #000; border-right: 1px solid #000; } .f2 { background: #0c0c0c; border-top: 1px solid #000; padding: 3px; }
    .f2 i { display: block; width: 402px; height: 8px; border-radius: 4px; background: #575757; }
    .tip { position: absolute; left: 102px; top: 272px; height: 19px; padding: 0 8px 0 7px; font: 400 11px/18px Inter, "Noto Sans CJK SC"; color: #2c2c2c; background: linear-gradient(90deg, #b2b2b2, #c0c0c0 65%, #b9dbbf 68%); white-space: nowrap; box-shadow: 0 1px 3px #0008; }
  `; }
  html() {
    const bars = [...Array(16)].map((_, i) => `<span>${i * 2 + 1}</span>`).join('');
    const R = (x, w, name, pat, st = '') => `<track-region x="${x}" w="${w}" name="${name}" pat="${pat}" ${st}></track-region>`;
    const lanes = ['', R(10, 424, '地下酒吧', 'none') + R(434, 424, '单簧管独奏', 'none'),
      R(10, 424, 'Cop Show Clav', 'clav', 'muted') + R(434, 212, '贝森朵夫大钢琴', 'solo', 'muted') + R(646, 212, '贝森朵夫大钢琴', 'solo', 'muted'),
      R(10, 424, '巴洛克风琴', 'organ') + R(434, 424, '巴洛克风琴', 'organ'),
      R(10, 212, 'MIDI 片段', 'midi1') + R(222, 212, '贝森朵夫大钢琴', 'bosen') + R(434, 424, 'MIDI 片段', 'midi2'),
      R(10, 424, '', 'clav', 'sel') + R(434, 422, 'Inst 1', 'clav') + R(856, 422, 'Inst 1', 'clav') + R(1278, 424, 'Inst 1', 'clav'),
      R(10, 424, 'Inst 1', 'guitar') + R(434, 424, 'Inst 1', 'guitar')];
    const T = [['drums', '地下酒吧', 80], ['clarinet', '单簧管独奏', 40, 'mute'], ['cello', '大提琴', 36], ['piano', '贝森朵夫大钢琴', 64, 'sel'], ['piano', '施坦威大钢琴', 32], ['guitar', 'Acoustic Guitar', 64]];
    return `<tool-bar kind="arrange"></tool-bar>
    <div class="body">
      <div class="heads"><div class="top"><button aria-label="新建轨道">${I('plus')}</button><button aria-label="复制轨道">${I('dup')}</button><button aria-label="轨道头选项">${I('cfg')}</button></div>
        <track-header n="1" icon="audio" name="音频 2" audio></track-header>
        ${T.map((t, i) => `<track-header n="${i + 2}" icon="${t[0]}" name="${t[1]}" vol="${t[2]}" ${t[3] || ''}></track-header>`).join('')}</div>
      <div class="time"><div class="ruler">${bars}</div>${lanes.map((l, i) => `<div class="lane ${i ? '' : 'a'}">${l}</div>`).join('')}
        <div class="cycle"></div><div class="head"><svg width="15" height="13"><path d="M1 0h13v6l-6 6.500h-1L1 6z" fill="#cfcfcf"/></svg></div></div>
      <div class="v"></div><div class="f1"></div><div class="f2"><i></i></div><div class="v"></div>
      <div class="tip">图标 - 按住 Control 键点按来打开图标菜单。</div>
    </div>`;
  }
});

/* ---------- piano roll ---------- */
def('piano-note', class extends Part {
  css() { return `:host { position: absolute; height: 15px; background: #5ea92f; box-shadow: inset 0 1px #70ba3c, 0 0 0 1px #000; padding: 6px 0 0 4px; } i { display: block; width: 63%; height: 2px; background: #e9ee94; }`; }
  html() { this.style.left = this.a('x') + 'px'; this.style.top = this.a('y') + 'px'; this.style.width = this.a('w') + 'px'; return '<i></i>'; }
});
def('quantize-panel', class extends Part {
  css() { return `
    :host { background: #3b3b3b; padding: 109px 9px 0 15px; font-size: 13px; color: #fff; }
    h4 { margin: 0 0 0 -1px; font: 400 13px/20px Inter, "Noto Sans CJK SC"; color: #b9b9b9; }
    .box { border: 1px solid #161616; border-radius: 4px; background: #2b2b2b; }
    .row { display: flex; height: 20px; margin: -1px; border: 1px solid #0c0c0c; border-radius: 4px; background: #252525; line-height: 18px; }
    .sel { display: flex; flex: 1; align-items: center; border-right: 1px solid #0c0c0c; padding: 0 6px 0 4px; } .sel select { flex: 1; min-width: 0; height: 18px; text-align: center; text-align-last: center; font-weight: 600; } .sel.s { flex: none; width: 61px; }
    .row button { width: 36px; color: #c4c4c4; font-weight: 400; padding-right: 4px; }
    .sl { display: grid; grid-template-columns: 35px 123px 1fr; align-items: center; height: 18px; padding-left: 8px; line-height: 18px; } .sl label { color: #b9b9b9; font-weight: 400; } .sl output { text-align: center; }
    .sls { padding: 5px 0 4px; }
    input { height: 12px; width: 100%; background: linear-gradient(#1b1b1b, #1b1b1b) 0 4px/100% 4px no-repeat; } input::-webkit-slider-thumb { -webkit-appearance: none; width: 11px; height: 11px; border-radius: 50%; background: #8e8e8e; box-shadow: 0 1px 1px #0008; }
    .b2 { margin-top: 70px; } .b3 { margin-top: 69px; }
    .vel { display: grid; grid-template-columns: 157px 1fr; height: 24px; align-items: center; padding-left: 9px; } .vel output { text-align: center; }
  `; }
  html() { return `<h4>时间量化</h4><div class="box"><div class="row"><div class="sel"><select aria-label="时间量化"><option>16 分音符</option></select>${I('updown')}</div><button>量化</button></div>
      <div class="sls"><div class="sl"><label for="s1">强度</label><input id="s1" type="range" value="98"><output>100</output></div><div class="sl"><label for="s2">摇摆</label><input id="s2" type="range" value="0"><output>0</output></div></div></div>
    <h4 class="b2">音阶量化</h4><div class="box"><div class="row"><div class="sel s"><select aria-label="根音"><option>关</option></select>${I('updown')}</div><div class="sel"><select aria-label="音阶"><option>大调</option></select>${I('updown')}</div><button>量化</button></div></div>
    <h4 class="b3"><label for="v">力度</label></h4><div class="box vel"><input id="v" type="range" value="62"><output>80</output></div>`; }
});
def('piano-keys', class extends Part {
  css() { return `:host { background: #d2d2d4; overflow: hidden; border-left: 1px solid #000; position: relative; } svg { display: block; position: absolute; } text { font: 700 11px Inter; fill: #111; stroke: none; }`; }
  html() {
    let s = '';
    for (let o = -1; o < 3; o++) {
      const y = 28 + o * 192;
      for (let k = 0; k < 7; k++) s += `<path d="M0 ${Math.round(y + k * 27.43) + .5}h38" stroke="#333" stroke-width="1"/>`;
      [17, 49, 81, 129, 161].forEach(b => s += `<rect x="0" y="${y + b}" width="18" height="14" fill="#141414" stroke="none"/>`);
      if (o < 2) s += `<text x="35" y="${y + 188}" text-anchor="end">C${3 - o}</text>`;
    }
    return S(38, 520, s);
  }
});
def('piano-roll', class extends Part {
  css() { return `
    :host { display: flex; flex-direction: column; min-height: 0; margin-left: 2px; border-top: 1px solid #000; border-radius: 5px 0 0 0; background: #0c0c0c; overflow: hidden; }
    nav { height: 29px; display: flex; justify-content: center; background: #1e1e1e; border-bottom: 1px solid #000; color: #fff; }
    nav button { width: 101px; border-right: 1px solid #0a0a0a; font-size: 13px; font-weight: 700; padding: 0 4px 2px 0; } nav .on { background: #343434; border-left: 1px solid #0a0a0a; } nav .off { color: #808080; font-weight: 400; }
    .body { flex: 1; display: grid; grid-template-columns: 227px 39px 1fr 15px; grid-template-rows: 45px 1fr 15px; min-height: 0; }
    .hd { grid-column: 1 / 3; display: flex; align-items: center; background: #2b2b2b; border-bottom: 1px solid #000; padding: 0 7px 2px 6px; border-right: 1px solid #000; }
    .hd div { flex: 1; text-align: center; font: 400 11px/14px Inter, "Noto Sans CJK SC"; color: #b5b5b5; } .hd b { display: block; font-size: 13px; line-height: 16px; color: #fff; font-weight: 600; } .hd button { width: 33px; height: 21px; border: 1px solid #0f0f0f; border-radius: 4px; background: #1e1e1e; color: #fff; }
    .rul { overflow: hidden; position: relative; } .lab { height: 23px; display: flex; padding-left: 10px; background: #0b0b0b; font-size: 12px; line-height: 16px; color: #cdcdcd; }
    .lab span { flex: none; width: 269px; } .lab span.x { width: 270px; } .lab .b { padding-left: 4px; background: linear-gradient(#3a3a3a, #3a3a3a) 0 3px/1px 20px no-repeat; }
    .reg { margin-left: 11px; height: 22px; background: #00870a; border-radius: 4px 0 0 0; border-bottom: 1px solid #000; color: #d6f7da; font-size: 11px; line-height: 18px; display: flex; align-items: center; position: relative; overflow: hidden; }
    .reg svg { position: absolute; left: 0; top: 0; } .reg daw-icon { margin: 0 6px 2px 5px; } .reg span { position: relative; height: 20px; } .reg .c { margin-left: auto; margin-right: 568px; }
    quantize-panel { grid-column: 1; grid-row: 2 / 4; } piano-keys { grid-column: 2; grid-row: 2; }
    .grid { position: relative; overflow: hidden; grid-column: 3; grid-row: 2; border-left: 1px solid #000;
      background: linear-gradient(#070707 0 16px, #010101 16px 32px, #070707 32px 48px, #010101 48px 64px, #070707 64px 80px, #010101 80px 96px, #070707 96px 112px, #060606 112px 128px, #010101 128px 144px, #070707 144px 160px, #010101 160px 176px, #070707 176px 191px, #121212 191px) 0 -164px/100% 192px; }
    .grid > svg { position: absolute; left: -1px; top: 0; } .edge { position: absolute; left: 10px; right: 0; top: 0; bottom: 0; border: solid #1a8a2a; border-width: 0 0 1px 1px; border-radius: 0 0 0 3px; }
    .c3 { position: absolute; left: 0; right: 0; top: 219px; height: 1px; background: #262626; }
    .v { background: #0f0f0f; border-left: 1px solid #000; grid-column: 4; padding: 221px 2px 0; } .v i { display: block; height: 128px; width: 8px; border-radius: 4px; background: #555; margin-left: 1px; }
    .h { grid-column: 3; grid-row: 3; padding: 4px; background: #0c0c0c; } .h i { display: block; width: 37px; height: 8px; border-radius: 4px; background: #575757; }
    .kf { grid-column: 2; grid-row: 3; background: #0c0c0c; border-right: 1px solid #000; } .v0 { grid-column: 4; background: #0f0f0f; }
  `; }
  html() {
    const step = 538.5 / 16, N = 50;
    const gl = [...Array(N)].map((_, k) => { const x = Math.round(10 + k * step) + .5; return `<path d="M${x} 0v520" stroke="${k % 16 === 0 ? '#303030' : k % 4 === 0 ? '#202020' : '#161616'}" stroke-width="1"/>`; }).join('');
    const tk = [...Array(N)].map((_, k) => { const x = Math.round(-1 + k * step) + .5; return k ? `<path d="M${x} ${k % 16 === 0 ? 0 : k % 4 === 0 ? 7 : 13}v22" stroke="#003a05" stroke-width="1"/>` : ''; }).join('');
    const notes = { 396: [[515, 135], [915, 134], [1050, 135], [1454, 132], [1588, 131], [1992, 132], [2126, 40]], 284: [[578, 136], [848, 134], [1117, 136], [1386, 135], [1655, 136], [1924, 135]], 204: [[780, 136], [1319, 136], [1723, 133], [1857, 136]], 172: [[646, 136], [1184, 137], [1789, 132]], 140: [[1252, 132]], 92: [[714, 132]] };
    const nn = Object.entries(notes).map(([y, a]) => a.map(([x, w]) => `<piano-note x="${x - 501}" y="${y}" w="${w}"></piano-note>`).join('')).join('');
    return `<nav><button class="on">钢琴卷帘</button><button>乐谱</button><button class="off">步进音序器</button><button>智能速度</button></nav>
    <tool-bar kind="piano"></tool-bar>
    <div class="body">
      <div class="hd">${I('piano')}<div><b>施坦威大钢琴</b>未选定片段</div><button aria-label="选项">${I('cfg')}</button></div>
      <div class="rul"><div class="lab"><span class="b">1</span><span>1 3</span><span class="b x">2</span><span>2 3</span><span class="b">3</span><span class="x">3 3</span><span class="b">4</span></div>
        <div class="reg"><svg width="1700" height="22" fill="none">${tk}</svg>${I('region')}<span>Inst 1</span><span class="c">Inst 1</span></div></div>
      <div class="v0"></div>
      <quantize-panel></quantize-panel><piano-keys></piano-keys>
      <div class="grid"><svg width="1700" height="520">${gl}</svg><div class="c3"></div><div class="edge"></div>${nn}</div>
      <div class="v"><i></i></div><div class="kf"></div><div class="h"><i></i></div>
    </div>`;
  }
});

/* ---------- app shell ---------- */
def('dock-strip', class extends Part {
  css() { return ':host{background:linear-gradient(#8a8a8a 1px,#555 1px 3px,#1a1a1a 3px)} svg{display:block;width:100%;height:13px}'; }
  html() { return `<svg viewBox="0 0 2172 13" preserveAspectRatio="none"><defs><linearGradient id="g"><stop offset="0" stop-color="#1a1a1a"/><stop offset=".3" stop-color="#5c2814"/><stop offset=".7" stop-color="#5c2814"/><stop offset="1" stop-color="#1a1a1a"/></linearGradient><linearGradient id="b"><stop offset="0" stop-color="#1a1a1a"/><stop offset=".5" stop-color="#262b35"/><stop offset="1" stop-color="#1a1a1a"/></linearGradient></defs>
    <rect x="1400" y="3" width="310" height="10" fill="url(#g)"/><rect x="1240" y="3" width="120" height="10" fill="url(#b)"/><rect x="1710" y="3" width="370" height="10" fill="#202329"/><rect x="2080" y="3" width="92" height="10" fill="#20223a"/><path d="M2090 4l4 9M2110 3l6 10M2135 4l3 9M2160 3l6 10" stroke="#0b0b12" stroke-width="3"/>
    <path d="M28 11l4-2 4 4h-8z" fill="#17b179"/><path d="M48 10l2 3h-3z" fill="#7fd13b"/><path d="M84 10l12 3h-12zM156 10h14l3 3h-17z" fill="#e0156d"/><rect x="225" y="11" width="53" height="5" rx="2" fill="#0f56c4"/><rect x="301" y="11" width="45" height="5" rx="2" fill="#cf1212"/><path d="M190 10l3 3h-4z" fill="#2a49d8"/>
    <rect x="516" y="10" width="46" height="6" rx="3" fill="#e6e6e6"/><ellipse cx="610" cy="14" rx="8" ry="4" fill="#000"/><ellipse cx="683" cy="14" rx="14" ry="5" fill="#f2c40f"/><path d="M697 13l4-4v4z" fill="#19b08f"/><rect x="943" y="9" width="55" height="8" rx="6" fill="#d90505"/><path d="M1051 10l2 3h-4zM1200 9l6 4h-9z" fill="#e8c828"/><ellipse cx="1353" cy="14" rx="10" ry="8" fill="#e60f0f"/><path d="M1414 10l5 3h-6z" fill="#ddd"/><path d="M1466 11l16-2 8 4h-24z" fill="#214c46"/><path d="M1485 9l3 4h-4z" fill="#e7d04a"/><path d="M1613 9l4 4h-6z" fill="#ddd"/><path d="M1953 11h13v2h-13zM1976 11h14v2h-14zM2030 13l4-4 6 4 5-3 3 3z" fill="#e2e2e2"/></svg>`; }
});
def('daw-app', class extends Part {
  css() { return `
    :host { display: grid; grid-template-rows: 61px 1fr 13px; height: 100vh; position: relative; }
    main { display: grid; grid-template-columns: 231px 1fr; column-gap: 1px; min-height: 0; background: #858585; } side-inspector { margin-top: 2px; }
    .work { display: grid; grid-template-rows: 605fr 639fr; gap: 6px; min-height: 0; min-width: 0; }
    .mark { position: absolute; right: 8px; bottom: 8px; font: 400 15px/22px "Open Sans", sans-serif; color: #b0b0b0; }
  `; }
  html() { return `<control-bar></control-bar><main><side-inspector></side-inspector><div class="work"><arrange-window></arrange-window><piano-roll></piano-roll></div></main><dock-strip></dock-strip><div class="mark">https://blog.csdn.net/qq_43768851</div>`; }
});
</script>
</body>
</html>
